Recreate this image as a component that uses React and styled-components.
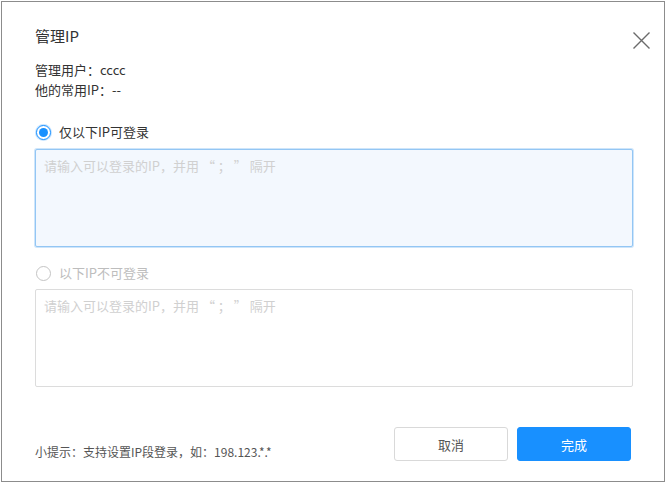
import React, { useState } from "react";
import styled, { createGlobalStyle } from "styled-components";

const GlobalStyle = createGlobalStyle`
  html, body {
    margin: 0;
    padding: 0;
    background: #fff;
  }
  body {
    font-family: "Noto Sans CJK SC", "Noto Sans", sans-serif;
    color: #333;
  }
`;

const Dialog = styled.div`
  box-sizing: border-box;
  margin: 1px;
  width: 664px;
  height: 481px;
  border: 1px solid #8c8c8c;
  background: #fff;
  position: relative;
  display: flex;
  flex-direction: column;
  padding: 23px 33px 0 33px;
`;

const Title = styled.h2`
  margin: 0;
  font-size: 15px;
  line-height: 22px;
  font-weight: 400;
  color: #333;
`;

const CloseButton = styled.button`
  position: absolute;
  top: 27px;
  right: 12px;
  width: 22px;
  height: 22px;
  padding: 0;
  border: none;
  background: transparent;
  display: flex;
  align-items: center;
  justify-content: center;
  cursor: pointer;
`;

const Info = styled.div`
  margin-top: 13px;
  display: flex;
  flex-direction: column;
`;

const InfoLine = styled.div`
  font-size: 13px;
  line-height: 20px;
  color: #333;
`;

const RadioRow = styled.label`
  display: flex;
  align-items: center;
  gap: 8px;
  margin-top: ${(p) => p.top}px;
  margin-bottom: ${(p) => p.bottom}px;
  padding-left: 1px;
  font-size: 13px;
  line-height: 20px;
  color: ${(p) => (p.checked ? "#333" : "#bdbdbd")};
  cursor: pointer;
`;

const RadioDot = styled.span`
  box-sizing: border-box;
  width: 15px;
  height: 15px;
  border-radius: 50%;
  border: 1px solid ${(p) => (p.checked ? "#1890ff" : "#c4c4c4")};
  background: #fff;
  display: flex;
  align-items: center;
  justify-content: center;
  box-shadow: ${(p) => (p.checked ? "0 0 0 1px rgba(24,144,255,0.25)" : "none")};
  &::after {
    content: "";
    width: 9px;
    height: 9px;
    border-radius: 50%;
    background: ${(p) => (p.checked ? "#1890ff" : "transparent")};
  }
`;

const Area = styled.textarea`
  box-sizing: border-box;
  display: block;
  width: 598px;
  height: 98px;
  margin: 0;
  padding: 6px 8px;
  resize: none;
  outline: none;
  border-radius: 2px;
  font-family: "Noto Sans CJK SC", "Noto Sans", sans-serif;
  font-size: 13px;
  line-height: 20px;
  color: #333;
  border: 1px solid ${(p) => (p.active ? "#93c6f4" : "#dcdcdc")};
  background: ${(p) => (p.active ? "#f3f8fe" : "#fff")};
  box-shadow: ${(p) => (p.active ? "0 0 0 1px rgba(147,198,244,0.45)" : "none")};
  &::placeholder {
    color: #d0d0d0;
  }
`;

const Footer = styled.div`
  margin-top: auto;
  margin-bottom: 20px;
  display: flex;
  align-items: flex-end;
  justify-content: space-between;
`;

const Hint = styled.div`
  font-size: 12px;
  line-height: 18px;
  color: #555;
  margin-bottom: 0;
`;

const Buttons = styled.div`
  display: flex;
  gap: 9px;
  margin-right: 0;
`;

const Button = styled.button`
  box-sizing: border-box;
  width: 114px;
  height: 34px;
  border-radius: 3px;
  font-family: "Noto Sans CJK SC", "Noto Sans", sans-serif;
  font-size: 13px;
  cursor: pointer;
  border: 1px solid ${(p) => (p.primary ? "#1890ff" : "#d9d9d9")};
  background: ${(p) => (p.primary ? "#1890ff" : "#fff")};
  color: ${(p) => (p.primary ? "#fff" : "#555")};
`;

const placeholder = "请输入可以登录的IP，并用 “ ； ” 隔开";

export default function App() {
  const [mode, setMode] = useState("allow");

  return (
    <>
      <GlobalStyle />
      <Dialog>
        <Title>管理IP</Title>
        <CloseButton aria-label="关闭">
          <svg width="19" height="19" viewBox="0 0 19 19">
            <path
              d="M1.5 1.5 L17.5 17.5 M17.5 1.5 L1.5 17.5"
              stroke="#6b6b6b"
              strokeWidth="1.4"
              fill="none"
            />
          </svg>
        </CloseButton>
        <Info>
          <InfoLine>管理用户：cccc</InfoLine>
          <InfoLine>他的常用IP：--</InfoLine>
        </Info>

        <RadioRow
          top={22}
          bottom={7}
          checked={mode === "allow"}
          onClick={() => setMode("allow")}
        >
          <RadioDot checked={mode === "allow"} />
          仅以下IP可登录
        </RadioRow>
        <Area active={mode === "allow"} placeholder={placeholder} />

        <RadioRow
          top={16}
          bottom={6}
          checked={mode === "deny"}
          onClick={() => setMode("deny")}
        >
          <RadioDot checked={mode === "deny"} />
          以下IP不可登录
        </RadioRow>
        <Area active={mode === "deny"} placeholder={placeholder} />

        <Footer>
          <Hint>小提示：支持设置IP段登录，如：198.123.*.*</Hint>
          <Buttons>
            <Button>取消</Button>
            <Button primary>完成</Button>
          </Buttons>
        </Footer>
      </Dialog>
    </>
  );
}
